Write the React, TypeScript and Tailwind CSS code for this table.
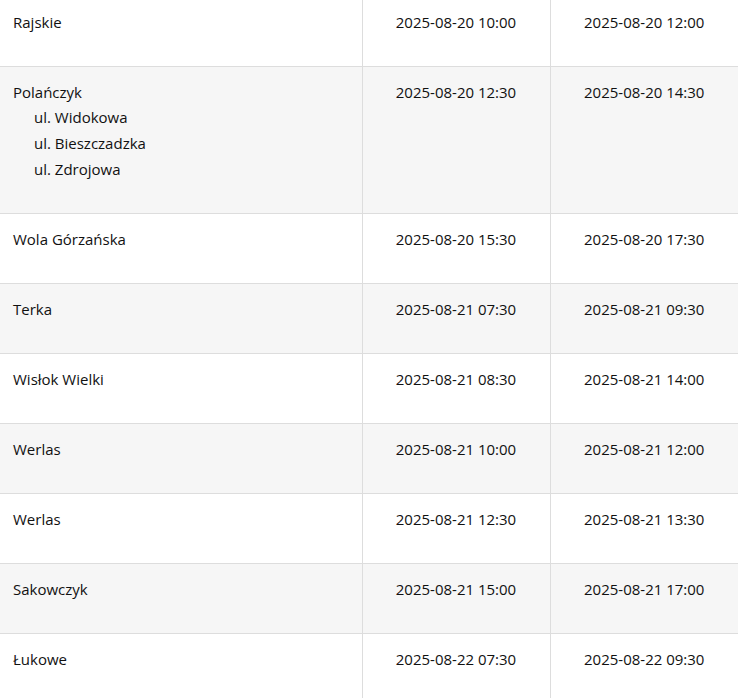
import React from "react";

type Row = { name: string; subs?: string[]; start: string; end: string };

const rows: Row[] = [
  { name: "Rajskie", start: "2025-08-20 10:00", end: "2025-08-20 12:00" },
  {
    name: "Polańczyk",
    subs: ["ul. Widokowa", "ul. Bieszczadzka", "ul. Zdrojowa"],
    start: "2025-08-20 12:30",
    end: "2025-08-20 14:30",
  },
  { name: "Wola Górzańska", start: "2025-08-20 15:30", end: "2025-08-20 17:30" },
  { name: "Terka", start: "2025-08-21 07:30", end: "2025-08-21 09:30" },
  { name: "Wisłok Wielki", start: "2025-08-21 08:30", end: "2025-08-21 14:00" },
  { name: "Werlas", start: "2025-08-21 10:00", end: "2025-08-21 12:00" },
  { name: "Werlas", start: "2025-08-21 12:30", end: "2025-08-21 13:30" },
  { name: "Sakowczyk", start: "2025-08-21 15:00", end: "2025-08-21 17:00" },
  { name: "Łukowe", start: "2025-08-22 07:30", end: "2025-08-22 09:30" },
];

export default function App() {
  return (
    <div
      className="w-[738px] h-[698px] overflow-hidden bg-white text-[#111] text-[15px] leading-[25.67px]"
      style={{ fontFamily: '"Open Sans", "Noto Sans", sans-serif' }}
    >
      <table className="w-[738px] -mt-[3px] border-collapse table-fixed">
        <colgroup>
          <col className="w-[362px]" />
          <col className="w-[188px]" />
          <col className="w-[188px]" />
        </colgroup>
        <tbody>
          {rows.map((r, i) => (
            <tr
              key={i}
              className={`${i % 2 === 1 ? "bg-[#f6f6f6]" : "bg-white"} border-b border-[#dddddd] align-top`}
            >
              <td className="pl-[13px] pr-3 pt-[12.5px] pb-[30.83px]">
                <div>{r.name}</div>
                {r.subs?.map((s) => (
                  <div key={s} className="pl-[21px]">
                    {s}
                  </div>
                ))}
              </td>
              <td className="border-l border-[#dddddd] text-center pt-[12.5px] pb-[30.83px]">
                {r.start}
              </td>
              <td className="border-l border-[#dddddd] text-center pt-[12.5px] pb-[30.83px]">
                {r.end}
              </td>
            </tr>
          ))}
        </tbody>
      </table>
    </div>
  );
}
